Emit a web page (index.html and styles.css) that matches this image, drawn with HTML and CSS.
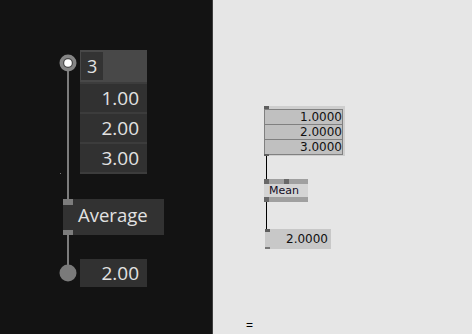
FILE: index.html
```html
<!DOCTYPE html>
<html>
<head>
<meta charset="utf-8">
<link rel="stylesheet" href="styles.css">
</head>
<body>
<div class="stage">
  <div class="pane-dark">
    <div class="wire-g wire-g-top"></div>
    <div class="wire-g wire-g-bottom"></div>
    <svg class="pad-in" width="18" height="18" viewBox="0 0 18 18">
      <circle cx="9" cy="9" r="8.5" fill="#858585"/>
      <circle cx="9" cy="9" r="5" fill="#4a4a4a"/>
      <circle cx="9" cy="9" r="3.8" fill="#ffffff"/>
    </svg>
    <span class="speck"></span>
    <div class="spread-g">
      <div class="spread-g-head"><span class="count">3</span></div>
      <div class="cell-g">1.00</div>
      <div class="cell-g">2.00</div>
      <div class="cell-g">3.00</div>
    </div>
    <div class="node-g">
      <span class="pin-g pin-g-top"></span>
      <span class="node-g-label">Average</span>
      <span class="pin-g pin-g-bottom"></span>
    </div>
    <svg class="pad-out" width="18" height="18" viewBox="0 0 18 18">
      <circle cx="9" cy="9" r="8.5" fill="#7a7a7a"/>
    </svg>
    <div class="out-g">2.00</div>
  </div>
  <div class="divider"></div>
  <div class="pane-light">
    <div class="iobox">
      <span class="pin-b pin-b-top"></span>
      <div class="rows">
        <div class="row">1.0000</div>
        <div class="row">2.0000</div>
        <div class="row">3.0000</div>
      </div>
      <span class="pin-b pin-b-bottom"></span>
    </div>
    <div class="wire-b wire-b-1"></div>
    <div class="node-b">
      <div class="node-b-strip">
        <span class="pin-b pin-b-a"></span>
        <span class="pin-b pin-b-c"></span>
      </div>
      <div class="node-b-label">Mean</div>
      <div class="node-b-strip">
        <span class="pin-b pin-b-a"></span>
      </div>
    </div>
    <div class="wire-b wire-b-2"></div>
    <div class="out-b">
      <span class="pin-b pin-b-top2"></span>
      2.0000
      <span class="pin-b pin-b-bottom2"></span>
    </div>
    <span class="equals">=</span>
  </div>
</div>
</body>
</html>
```

FILE: styles.css
```css
html, body {
  margin: 0;
  padding: 0;
}
body {
  width: 472px;
  height: 334px;
  overflow: hidden;
}
.stage {
  display: flex;
  width: 472px;
  height: 334px;
}
.pane-dark {
  width: 212px;
  height: 334px;
  background: #131313;
  position: relative;
  font-family: "Open Sans", "Noto Sans", sans-serif;
  color: #e2e2e2;
}
.divider {
  width: 1px;
  background: #3e3e3e;
}
.pane-light {
  flex: 1;
  height: 334px;
  background: #e6e6e6;
  position: relative;
  font-family: "DejaVu Sans", Verdana, sans-serif;
  color: #111111;
}

/* dark (gamma) patch */
.wire-g {
  position: absolute;
  left: 67px;
  width: 2px;
  background: #7c7c7c;
}
.wire-g-top { top: 63px; height: 137px; }
.wire-g-bottom { top: 235px; height: 38px; }
.pad-in { position: absolute; left: 59px; top: 54px; }
.pad-out { position: absolute; left: 59px; top: 264px; }
.speck {
  position: absolute;
  left: 60px;
  top: 173px;
  width: 1px;
  height: 1px;
  background: #777;
}
.spread-g {
  position: absolute;
  left: 80px;
  top: 50px;
  width: 67px;
  display: flex;
  flex-direction: column;
  gap: 2px;
  padding-bottom: 2px;
  background: #3c3c3c;
}
.spread-g-head {
  height: 32px;
  background: #484848;
  padding: 2px 0 0 1px;
  box-sizing: border-box;
}
.count {
  display: flex;
  align-items: center;
  width: 22px;
  height: 28px;
  padding-left: 6px;
  box-sizing: border-box;
  background: #333333;
  font-size: 18px;
}
.cell-g, .out-g {
  height: 28px;
  background: #313131;
  display: flex;
  align-items: center;
  justify-content: flex-end;
  padding-right: 8px;
  font-size: 19px;
  line-height: 1;
}
.out-g {
  position: absolute;
  left: 80px;
  top: 259px;
  width: 67px;
  box-sizing: border-box;
}
.node-g {
  position: absolute;
  left: 63px;
  top: 199px;
  width: 101px;
  height: 36px;
  background: #323232;
  display: flex;
  align-items: center;
  padding-left: 15px;
  box-sizing: border-box;
}
.node-g-label {
  font-size: 18.5px;
  line-height: 1;
  margin-top: -3px;
}
.pin-g {
  position: absolute;
  left: 0;
  width: 10px;
  background: #7c7c7c;
}
.pin-g-top { top: 0; height: 6px; }
.pin-g-bottom { bottom: 0; height: 5px; }

/* light (beta) patch */
.pin-b {
  position: absolute;
  width: 5px;
  background: #5e5e5e;
}
.iobox {
  position: absolute;
  left: 51px;
  top: 106px;
  width: 81px;
  height: 50px;
  background: #cecece;
}
.pin-b-top { left: 0; top: 0; height: 3px; }
.pin-b-bottom { left: 0; bottom: 0; height: 2px; }
.rows {
  margin-top: 3px;
  width: 79px;
  border: 1px solid #808080;
  box-sizing: border-box;
  background: #c0c0c0;
}
.row {
  height: 15px;
  border-bottom: 1px solid #808080;
  box-sizing: border-box;
  text-align: right;
  font-size: 12px;
  line-height: 15px;
  padding-right: 0;
}
.row:last-child { border-bottom: none; height: 14px; }
.wire-b {
  position: absolute;
  left: 53px;
  width: 1px;
  background: #000;
}
.wire-b-1 { top: 156px; height: 23px; }
.wire-b-2 { top: 202px; height: 27px; }
.node-b {
  position: absolute;
  left: 51px;
  top: 179px;
  width: 44px;
  display: flex;
  flex-direction: column;
}
.node-b-strip {
  position: relative;
  height: 5px;
  background: #a0a0a0;
}
.pin-b-a { left: 0; top: 0; height: 5px; background: #686868; }
.pin-b-c { left: 20px; top: 0; height: 5px; background: #686868; }
.node-b-label {
  height: 13px;
  background: #d4d4d4;
  font-size: 11px;
  line-height: 13px;
  padding-left: 5px;
  color: #120c24;
}
.out-b {
  position: absolute;
  left: 52px;
  top: 229px;
  width: 66px;
  height: 20px;
  background: #c8c8c8;
  font-size: 12px;
  line-height: 20px;
  text-align: right;
  padding-right: 3px;
  box-sizing: border-box;
}
.pin-b-top2 { left: 0; top: 0; height: 3px; }
.pin-b-bottom2 { left: 0; bottom: 0; height: 2px; background: #777; }
.equals {
  position: absolute;
  left: 33px;
  top: 318px;
  font-family: "Liberation Sans", Arial, sans-serif;
  font-size: 12px;
  line-height: 14px;
  color: #000;
}
```
